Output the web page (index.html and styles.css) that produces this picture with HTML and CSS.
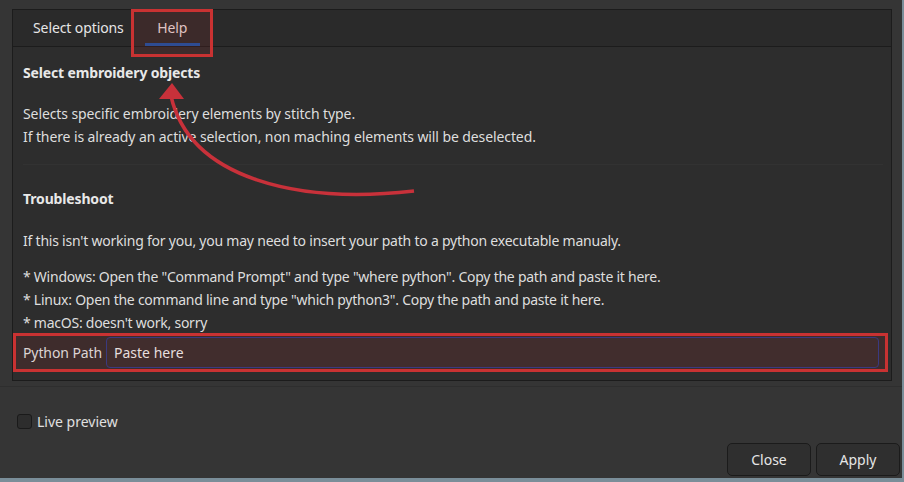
FILE: index.html
```html
<!DOCTYPE html>
<html>
<head>
<meta charset="utf-8">
<link rel="stylesheet" href="styles.css">
</head>
<body>
<div class="dialog">
  <div class="main">
    <div class="notebook">
      <div class="tabs">
        <div class="tab">Select options</div>
        <div class="tab active">Help<span class="underline"></span></div>
        <div class="mark-help"></div>
      </div>
      <div class="page">
        <div class="bold">Select embroidery objects</div>
        <div class="para first">
          <div>Selects specific embroidery elements by stitch type.</div>
          <div>If there is already an active selection, non maching elements will be deselected.</div>
        </div>
        <div class="sep"></div>
        <div class="bold trouble">Troubleshoot</div>
        <div class="line help1">If this isn't working for you, you may need to insert your path to a python executable manualy.</div>
        <div class="list">
          <div class="cond">* Windows: Open the "Command Prompt" and type "where python". Copy the path and paste it here.</div>
          <div class="cond">* Linux: Open the command line and type "which python3". Copy the path and paste it here.</div>
          <div class="cond">* macOS: doesn't work, sorry</div>
        </div>
        <div class="pathrow">
          <span class="pathlabel">Python Path</span>
          <div class="input">Paste here</div>
        </div>
      </div>
      <svg class="arrow" width="904" height="482" viewBox="0 0 904 482">
        <path d="M414 191 C300 204 190 180 171 96" fill="none" stroke="#c8313a" stroke-width="3.5"/>
        <polygon points="172,83 159,99 184,99" fill="#c8313a"/>
      </svg>
    </div>
  </div>
  <div class="footer">
    <label class="check"><span class="box"></span>Live preview</label>
    <div class="buttons">
      <div class="btn">Close</div>
      <div class="btn">Apply</div>
    </div>
  </div>
</div>
</body>
</html>
```
FILE: styles.css
```css
html, body {
  margin: 0;
  padding: 0;
}
body {
  width: 904px;
  height: 482px;
  background: #7a8e99;
  font-family: "Noto Sans", "DejaVu Sans", sans-serif;
  font-size: 14px;
  color: #dedede;
  overflow: hidden;
}
.dialog {
  width: 902px;
  height: 478px;
  background: #353535;
  display: flex;
  flex-direction: column;
}
.main {
  padding: 9px 12px 0 12px;
  height: 387px;
  box-sizing: border-box;
  border-bottom: 1px solid #2e2e2e;
}
.notebook {
  width: 880px;
  height: 372px;
  box-sizing: border-box;
  border: 1px solid #1c1c1c;
  background: #2d2d2d;
  display: flex;
  flex-direction: column;
}
.tabs {
  height: 37px;
  box-sizing: border-box;
  background: #2a2a2a;
  border-bottom: 1px solid #1c1c1c;
  display: flex;
  padding-left: 8px;
  position: relative;
}
.tab {
  position: relative;
  padding: 0 12px;
  line-height: 36px;
  color: #e6e6e6;
  letter-spacing: -0.1px;
}
.tab.active {
  margin-left: 9px;
  padding: 0;
  width: 55px;
  text-align: center;
  color: #e8dcdc;
}
.underline {
  position: absolute;
  left: 0;
  bottom: 0;
  width: 55px;
  height: 3px;
  background: #2e4c92;
  z-index: 2;
}
.mark-help {
  position: absolute;
  left: 118px;
  top: -1px;
  width: 76px;
  height: 42px;
  border: 3px solid #c93232;
  background: rgba(170, 40, 40, 0.14);
}
.page {
  padding: 14px 10px 0 10px;
  display: flex;
  flex-direction: column;
  line-height: 23px;
}
.bold {
  font-weight: bold;
  color: #e8e8e8;
  letter-spacing: -0.15px;
}
.para {
  letter-spacing: -0.1px;
}
.para.first {
  margin-top: 18px;
}
.sep {
  height: 1px;
  background: #323232;
  margin: 16px 0 0 0;
  width: 860px;
}
.trouble {
  margin-top: 22px;
}
.help1 {
  margin-top: 19px;
  letter-spacing: -0.22px;
}
.list {
  margin-top: 13px;
}
.cond {
  letter-spacing: -0.25px;
}
.pathrow {
  margin: 0 0 0 -10px;
  width: 875px;
  height: 39px;
  box-sizing: border-box;
  border: 3px solid #c93232;
  background: rgba(170, 40, 40, 0.14);
  display: flex;
  align-items: center;
  padding: 0 6px 0 7px;
  gap: 4px;
  position: relative;
  top: -1px;
}
.pathlabel {
  color: #dcd4d4;
  white-space: nowrap;
  letter-spacing: -0.1px;
}
.input {
  flex: 1;
  height: 31px;
  box-sizing: border-box;
  border: 1px solid #3a3a80;
  border-radius: 4px;
  background: #412d2d;
  padding-left: 7px;
  line-height: 29px;
  color: #e6dede;
}
.arrow {
  position: absolute;
  left: 0;
  top: 0;
  pointer-events: none;
}
.footer {
  flex: 1;
  display: flex;
  flex-direction: column;
  padding: 0 2px 2px 17px;
}
.check {
  display: flex;
  align-items: center;
  gap: 5px;
  margin-top: 25px;
  color: #e0e0e0;
}
.box {
  width: 13px;
  height: 13px;
  border: 1px solid #1a1a1a;
  border-radius: 3px;
  background: #2d2d2d;
}
.buttons {
  margin-top: auto;
  display: flex;
  justify-content: flex-end;
  gap: 5px;
}
.btn {
  width: 84px;
  height: 33px;
  box-sizing: border-box;
  border: 1px solid #1b1b1b;
  border-radius: 5px;
  background: #2f2f2f;
  text-align: center;
  line-height: 31px;
  color: #e6e6e6;
}
```
